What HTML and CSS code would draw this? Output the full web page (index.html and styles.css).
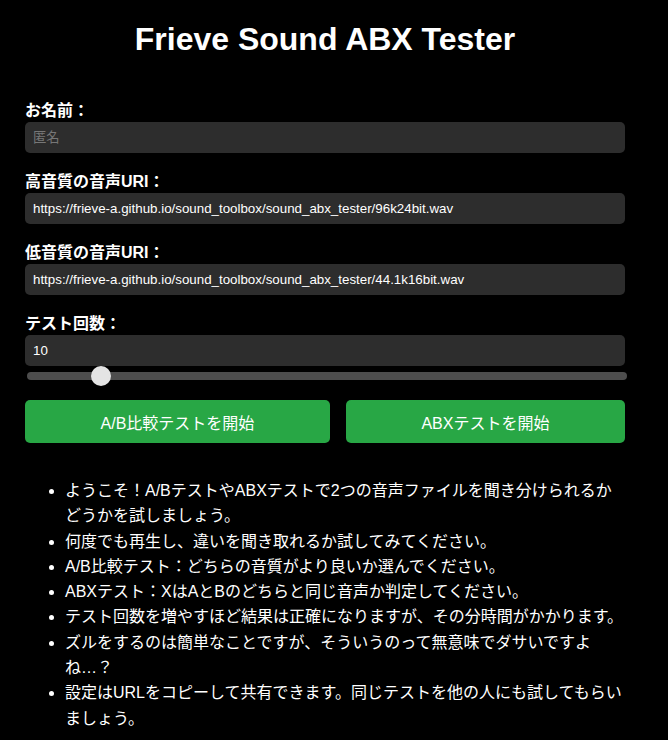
FILE: index.html
```html
<!DOCTYPE html>
<html lang="ja">
<head>
<meta charset="utf-8">
<title>Frieve Sound ABX Tester</title>
<link rel="stylesheet" href="styles.css">
</head>
<body>
<div class="container">
  <h1 class="title">Frieve Sound ABX Tester</h1>
  <div class="field">
    <label class="label" for="name">お名前：</label>
    <input class="text-input" id="name" type="text" placeholder="匿名">
  </div>
  <div class="field">
    <label class="label" for="hi">高音質の音声URI：</label>
    <input class="text-input" id="hi" type="text" value="https://frieve-a.github.io/sound_toolbox/sound_abx_tester/96k24bit.wav">
  </div>
  <div class="field">
    <label class="label" for="lo">低音質の音声URI：</label>
    <input class="text-input" id="lo" type="text" value="https://frieve-a.github.io/sound_toolbox/sound_abx_tester/44.1k16bit.wav">
  </div>
  <div class="field field-last">
    <label class="label" for="count">テスト回数：</label>
    <input class="text-input" id="count" type="text" value="10">
    <input class="slider" type="range" min="5" max="50" value="10">
  </div>
  <div class="buttons">
    <button class="btn" type="button">A/B比較テストを開始</button>
    <button class="btn" type="button">ABXテストを開始</button>
  </div>
  <ul class="notes">
    <li>ようこそ！A/BテストやABXテストで2つの音声ファイルを聞き分けられるかどうかを試しましょう。</li>
    <li>何度でも再生し、違いを聞き取れるか試してみてください。</li>
    <li>A/B比較テスト：どちらの音質がより良いか選んでください。</li>
    <li>ABXテスト：XはAとBのどちらと同じ音声か判定してください。</li>
    <li>テスト回数を増やすほど結果は正確になりますが、その分時間がかかります。</li>
    <li>ズルをするのは簡単なことですが、そういうのって無意味でダサいですよね…？</li>
    <li>設定はURLをコピーして共有できます。同じテストを他の人にも試してもらいましょう。</li>
  </ul>
</div>
</body>
</html>
```
FILE: styles.css
```css
html, body {
  margin: 0;
  padding: 0;
  background: #000;
}
body {
  color: #fff;
  font-family: "Liberation Sans", Arial, "Noto Sans CJK JP", sans-serif;
  font-size: 16px;
}
.container {
  width: 600px;
  margin: 0 25px;
}
.title {
  font-size: 32px;
  font-weight: bold;
  text-align: center;
  margin: 21px 0 42px;
  line-height: 37px;
}
.field {
  margin-bottom: 18px;
}
.field-last {
  margin-bottom: 0;
}
.label {
  display: block;
  font-weight: bold;
  font-size: 16px;
  line-height: 20px;
  padding-top: 1px;
  margin-bottom: 1px;
}
.text-input {
  display: block;
  box-sizing: border-box;
  width: 100%;
  height: 31px;
  margin: 0;
  padding: 0 8px;
  border: none;
  border-radius: 5px;
  background: #2d2d2d;
  color: #fff;
  font-family: "Liberation Sans", Arial, "Noto Sans CJK JP", sans-serif;
  font-size: 13.333px;
  outline: none;
}
.text-input::placeholder {
  color: #777;
}
.slider {
  -webkit-appearance: none;
  appearance: none;
  display: block;
  width: 100%;
  height: 8px;
  margin: 6px 0 20px 2px;
  padding: 0;
  background: #4d4d4d;
  border-radius: 4px;
  outline: none;
}
.slider::-webkit-slider-thumb {
  -webkit-appearance: none;
  appearance: none;
  width: 20px;
  height: 20px;
  border-radius: 50%;
  background: #e4e4e4;
  border: none;
}
.buttons {
  display: flex;
  gap: 16px;
}
.btn {
  flex: 1 1 auto;
  height: 43px;
  border: none;
  border-radius: 5px;
  background: #28a745;
  color: #fff;
  font-family: "Liberation Sans", Arial, "Noto Sans CJK JP", sans-serif;
  font-size: 16px;
  padding: 0 20px;
}
.notes {
  margin: 35px 0 0;
  padding-left: 40px;
  font-size: 16px;
  line-height: 25.3px;
}
```
